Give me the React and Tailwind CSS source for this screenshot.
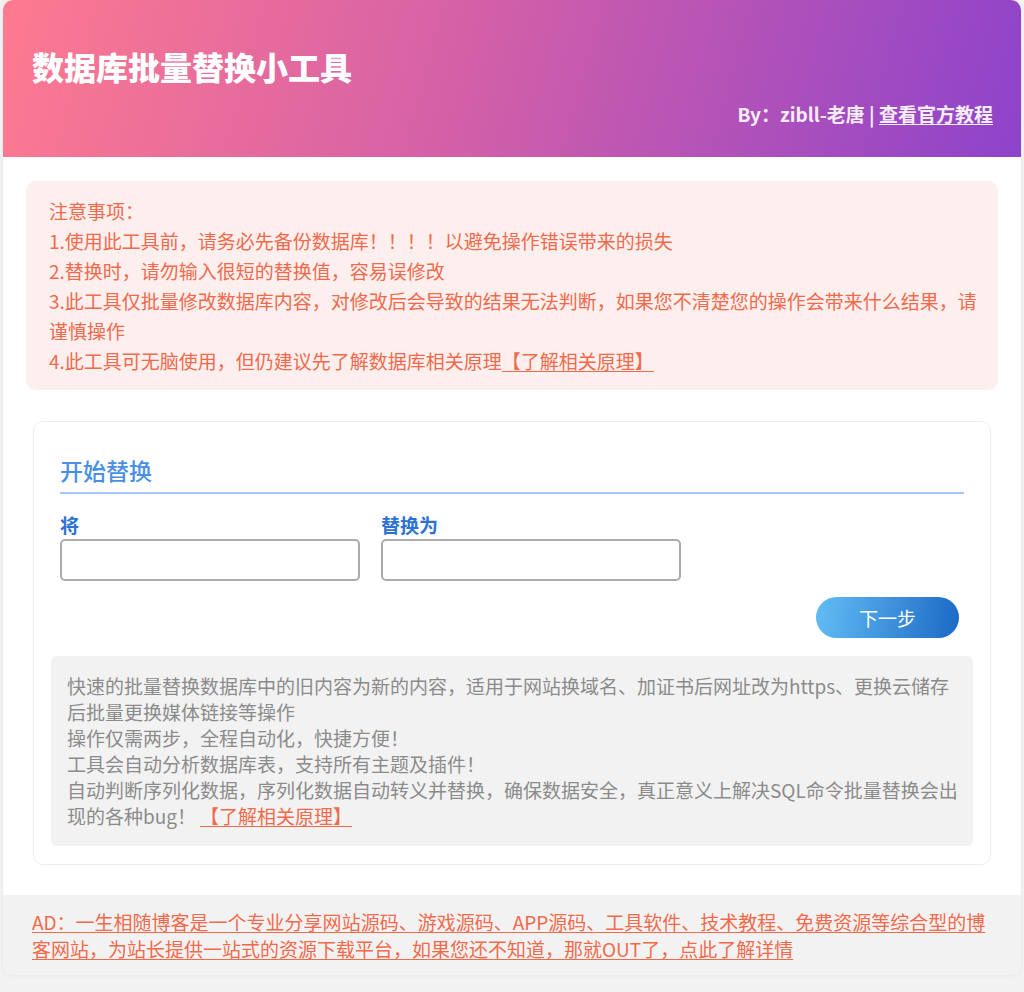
import React, { useState } from 'react';

const FONT = { fontFamily: '"Noto Sans CJK SC", "Noto Sans", sans-serif' };

const notices = [
  '1.使用此工具前，请务必先备份数据库！！！！以避免操作错误带来的损失',
  '2.替换时，请勿输入很短的替换值，容易误修改',
  '3.此工具仅批量修改数据库内容，对修改后会导致的结果无法判断，如果您不清楚您的操作会带来什么结果，请谨慎操作',
];

const App = () => {
  const [from, setFrom] = useState('');
  const [to, setTo] = useState('');

  return (
    <div className="min-h-screen bg-[#f2f2f2] px-[3px]" style={FONT}>
      <div className="bg-white rounded-[10px] overflow-hidden shadow-[0_0_4px_rgba(0,0,0,0.06)]">
        {/* 顶部标题 */}
        <header className="h-[157px] pl-[29px] pr-[28px] pt-[46px] bg-[linear-gradient(105deg,#fe7a90_0%,#d460a7_45%,#8d43cb_100%)] text-white">
          <h1 className="text-[32px] leading-[40px] font-black">数据库批量替换小工具</h1>
          <div className="mt-[15px] text-right text-[19px] leading-[26px] font-bold text-white/90">
            By：zibll-老唐 | <a href="#" className="underline underline-offset-2">查看官方教程</a>
          </div>
        </header>

        {/* 注意事项 */}
        <div className="mx-[23px] mt-[24px] rounded-[10px] bg-[#fcefee] pl-[23px] pr-[14px] pt-[15px] pb-[14px] text-[19px] leading-[30px] text-[#f06a4b]">
          <div>注意事项：</div>
          {notices.map((n) => (
            <div key={n}>{n}</div>
          ))}
          <div>
            4.此工具可无脑使用，但仍建议先了解数据库相关原理
            <a href="#" className="underline underline-offset-2">【了解相关原理】</a>
          </div>
        </div>

        {/* 开始替换 */}
        <div className="mx-[30px] mt-[31px] rounded-[10px] border border-[#ececec] px-[17px] pt-[31px] pb-[18px]">
          <div className="mx-[9px]">
            <h3 className="text-[23px] leading-[34px] font-medium text-[#4a8fe6] pb-[5px] border-b-2 border-[#a9c8f9]">开始替换</h3>
            <div className="flex gap-[21px] mt-[19px]">
              <label className="w-[300px]">
                <div className="text-[19px] leading-[24px] font-bold text-[#2d72d2]">将</div>
                <input
                  value={from}
                  onChange={(e) => setFrom(e.target.value)}
                  className="mt-[2px] w-full h-[42px] rounded-[5px] border-2 border-[#ababab] px-2 text-[17px] outline-none"
                />
              </label>
              <label className="w-[300px]">
                <div className="text-[19px] leading-[24px] font-bold text-[#2d72d2]">替换为</div>
                <input
                  value={to}
                  onChange={(e) => setTo(e.target.value)}
                  className="mt-[2px] w-full h-[42px] rounded-[5px] border-2 border-[#ababab] px-2 text-[17px] outline-none"
                />
              </label>
            </div>
            <div className="flex justify-end mt-[16px] pr-[5px]">
              <button className="w-[143px] h-[41px] rounded-full bg-[linear-gradient(100deg,#63bdf4,#1b69c5)] text-white text-[19px] leading-none">
                下一步
              </button>
            </div>
          </div>

          <div className="mt-[18px] rounded-[6px] bg-[#f2f2f2] pl-[16px] pr-[8px] pt-[17px] pb-[17px] text-[19px] leading-[26px] text-[#8b8b8b]">
            <div>快速的批量替换数据库中的旧内容为新的内容，适用于网站换域名、加证书后网址改为https、更换云储存后批量更换媒体链接等操作</div>
            <div>操作仅需两步，全程自动化，快捷方便！</div>
            <div>工具会自动分析数据库表，支持所有主题及插件！</div>
            <div>
              自动判断序列化数据，序列化数据自动转义并替换，确保数据安全，真正意义上解决SQL命令批量替换会出现的各种bug！
              <a href="#" className="ml-[4px] text-[#f06a4b] underline underline-offset-2">【了解相关原理】</a>
            </div>
          </div>
        </div>

        {/* AD */}
        <div className="mt-[30px] bg-[#f3f2f2] pl-[29px] pr-[25px] pt-[13px] pb-[13px] text-[19px] leading-[27px]">
          <a href="#" className="text-[#f06a4b] underline underline-offset-2">
            AD：一生相随博客是一个专业分享网站源码、游戏源码、APP源码、工具软件、技术教程、免费资源等综合型的博客网站，为站长提供一站式的资源下载平台，如果您还不知道，那就OUT了，点此了解详情
          </a>
        </div>
      </div>
    </div>
  );
};

export default App;
